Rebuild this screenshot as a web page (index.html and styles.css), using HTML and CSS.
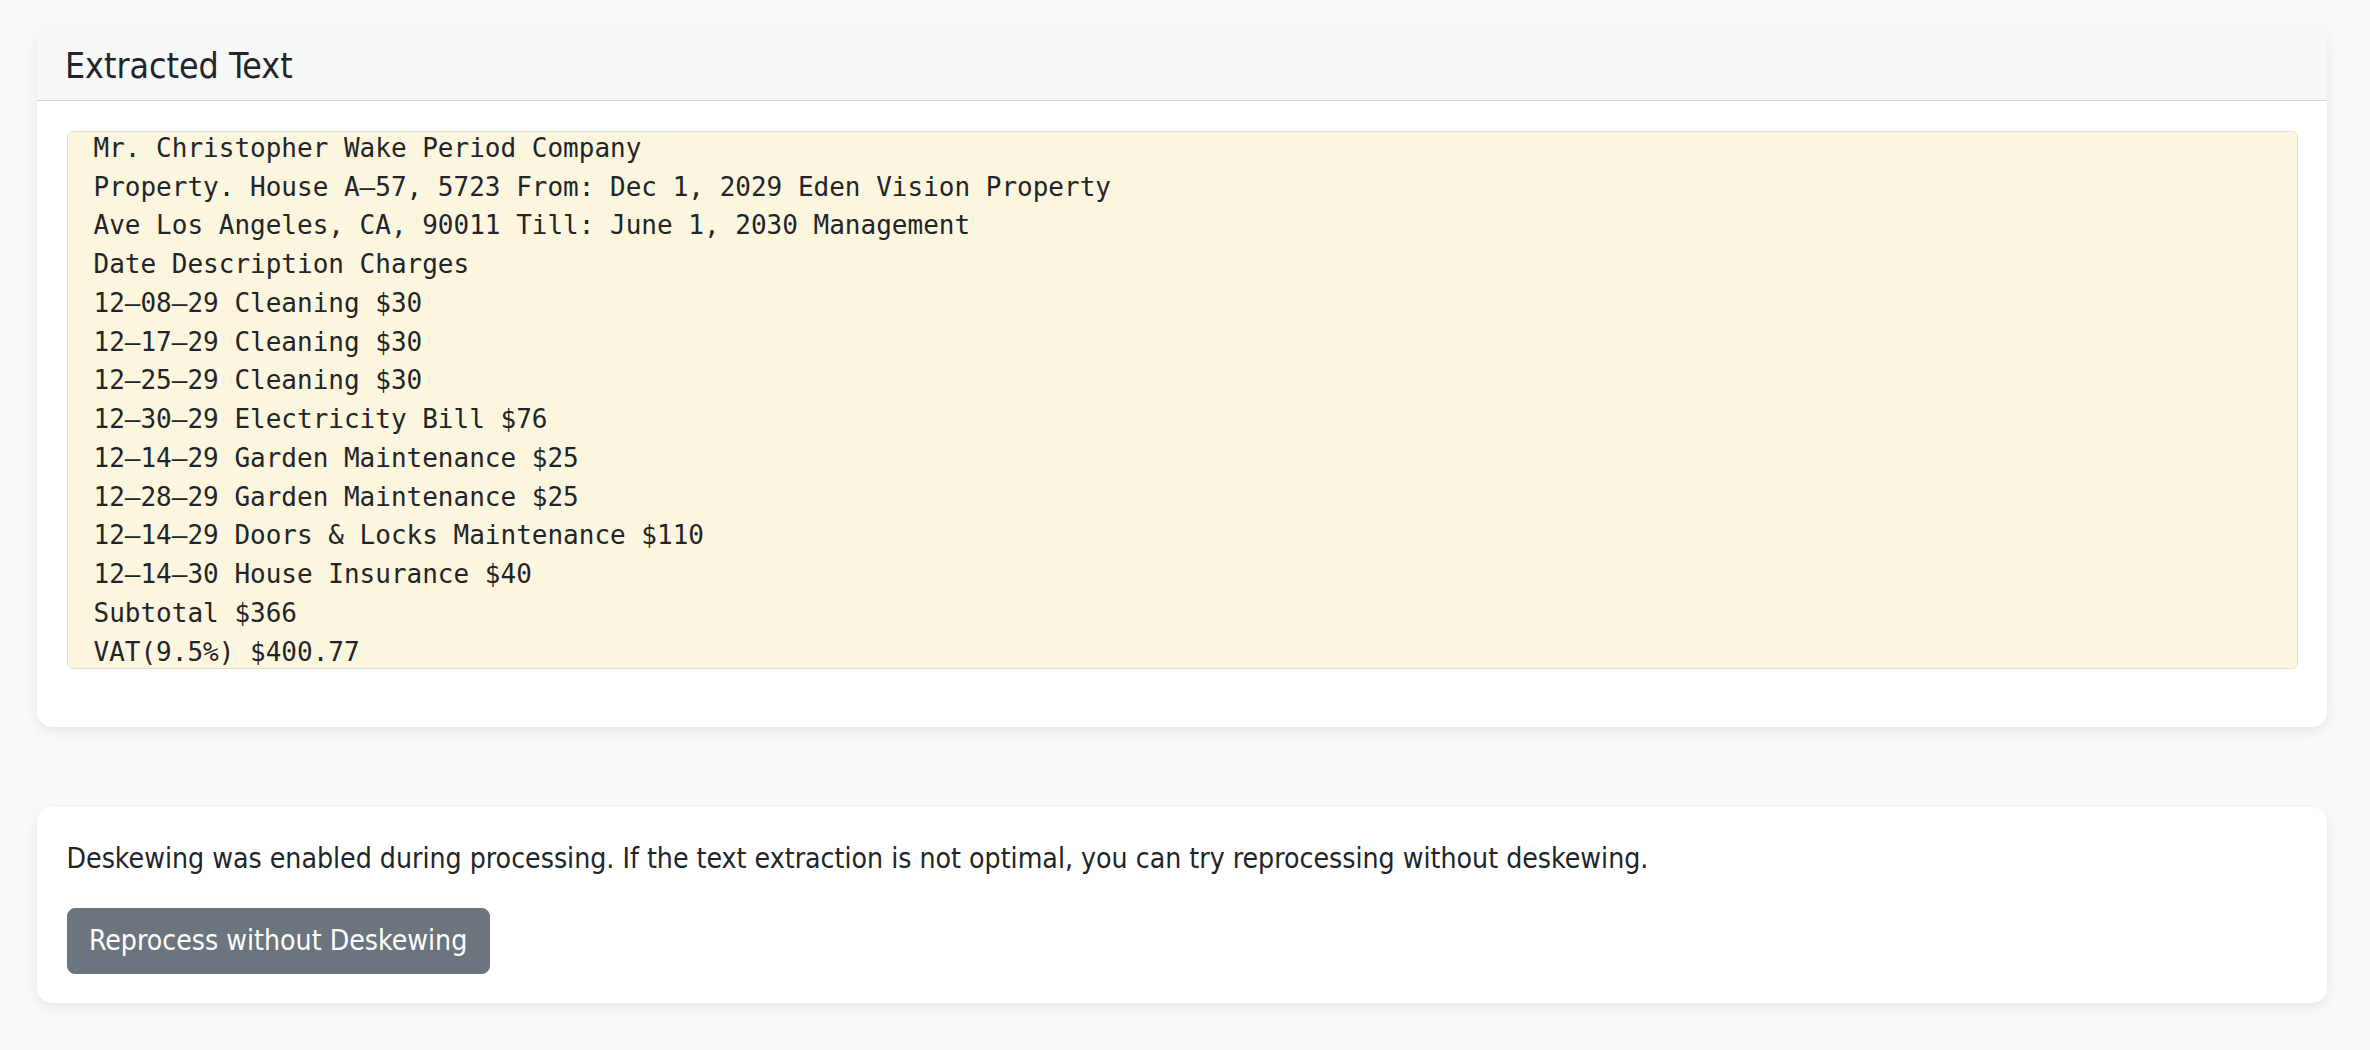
FILE: index.html
```html
<!DOCTYPE html>
<html lang="en">
<head>
<meta charset="utf-8">
<title>Extracted Text</title>
<link rel="stylesheet" href="styles.css">
</head>
<body>
<main class="page">
  <section class="card">
    <header class="card-header">
      <h5 class="card-title">Extracted Text</h5>
    </header>
    <div class="card-body">
      <pre class="extracted"><span class="lines">Mr. Christopher Wake Period Company
Property. House A–57, 5723 From: Dec 1, 2029 Eden Vision Property
Ave Los Angeles, CA, 90011 Till: June 1, 2030 Management
Date Description Charges
12–08–29 Cleaning $30
12–17–29 Cleaning $30
12–25–29 Cleaning $30
12–30–29 Electricity Bill $76
12–14–29 Garden Maintenance $25
12–28–29 Garden Maintenance $25
12–14–29 Doors &amp; Locks Maintenance $110
12–14–30 House Insurance $40
Subtotal $366
VAT(9.5%) $400.77</span></pre>
    </div>
  </section>

  <section class="card">
    <div class="card-body">
      <p class="note">Deskewing was enabled during processing. If the text extraction is not optimal, you can try reprocessing without deskewing.</p>
      <button class="btn" type="button">Reprocess without Deskewing</button>
    </div>
  </section>
</main>
</body>
</html>
```

FILE: styles.css
```css
html, body {
  margin: 0;
  padding: 0;
}

body {
  background: #f8f9fa;
  color: #212529;
  font-family: "DejaVu Sans Condensed", "DejaVu Sans", sans-serif;
  font-size: 28.2px;
  line-height: 1.5;
}

.page {
  display: flex;
  flex-direction: column;
  gap: 80px;
  padding: 27px 43px 48px 37px;
}

.card {
  background: #fff;
  border-radius: 15px;
  box-shadow: 0 4px 12px rgba(0, 0, 0, 0.08);
  overflow: hidden;
}

.card-header {
  background: #f7f7f7;
  border-bottom: 1px solid #d4d4d4;
  padding: 16.8px 29px 12.8px 28px;
}

.card-title {
  margin: 0;
  font-size: 35.4px;
  font-weight: 400;
  line-height: 43px;
}

.card-body {
  padding: 30.5px 29px 29px 29.5px;
}

.extracted {
  box-sizing: border-box;
  height: 538px;
  margin: 0 0 29px;
  padding: 0 27px 0 26px;
  background: #fdf6df;
  border: 1px solid #e4dfcc;
  border-radius: 6px;
  overflow: hidden;
  display: flex;
  flex-direction: column;
  justify-content: center;
  font-family: "DejaVu Sans Mono", monospace;
  font-size: 26px;
  line-height: 38.77px;
  color: #212529;
  white-space: pre;
}

.note {
  margin: 0 0 28px;
  line-height: 42.75px;
}

.btn {
  display: inline-block;
  background: #6c757d;
  color: #fff;
  border: 1px solid #6c757d;
  border-radius: 8px;
  padding: 10.6px 21.4px;
  font-family: inherit;
  font-size: 28.2px;
  line-height: 42.75px;
  cursor: pointer;
}
```
